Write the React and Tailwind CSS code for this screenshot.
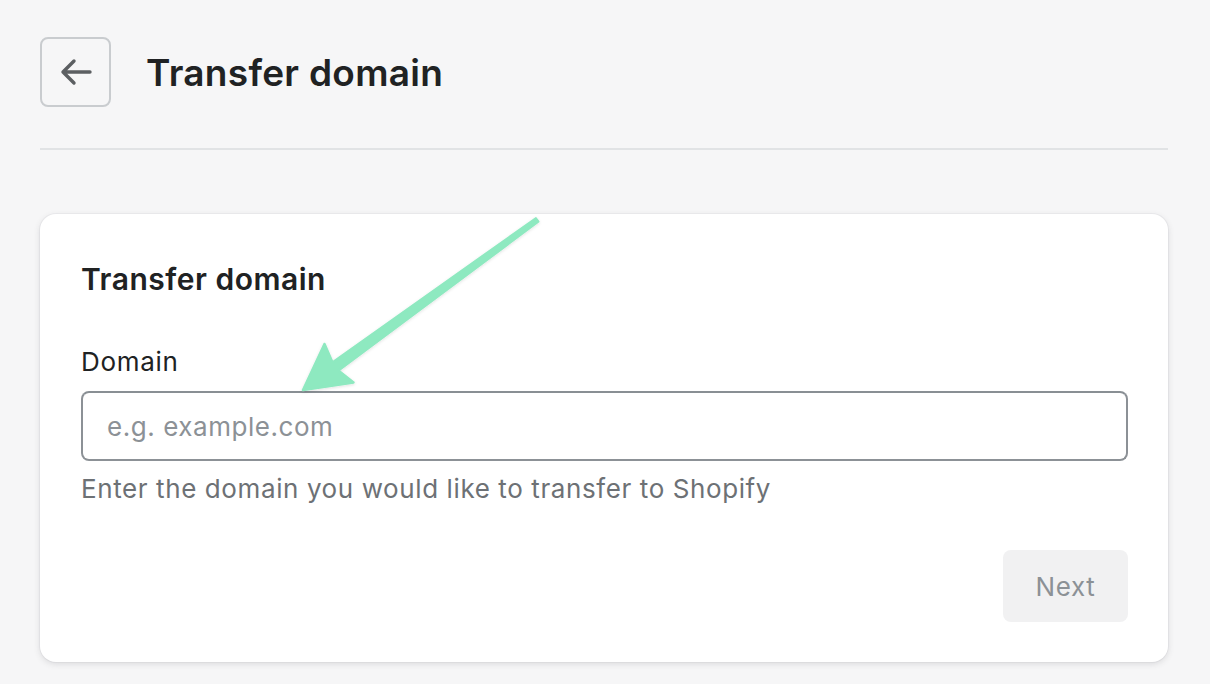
import React from 'react';

const font = { fontFamily: 'Inter, "Liberation Sans", sans-serif' };

const BackArrow = () => (
	<svg width="34" height="30" viewBox="0 0 34 30" fill="none">
		<path d="M31 15H4M15 4L4 15l11 11" stroke="#5c5f62" strokeWidth="3.4" strokeLinecap="round" strokeLinejoin="round" />
	</svg>
);

// arrow drawn over the page, pointing at the input
const GreenArrow = () => (
	<svg className="absolute inset-0 w-full h-full pointer-events-none" viewBox="0 0 1210 684">
		<defs>
			<filter id="sh" x="-20%" y="-20%" width="140%" height="140%">
				<feDropShadow dx="0" dy="1" stdDeviation="1.5" floodColor="#000" floodOpacity="0.12" />
			</filter>
		</defs>
		<polygon
			points="535.8,218.4 332.5,362.4 324.5,344 303,390 353.5,382.5 338.3,370.5 538.2,221.6"
			fill="#8ee9c0"
			stroke="#8ee9c0"
			strokeWidth="2.5"
			strokeLinejoin="round"
			filter="url(#sh)"
		/>
	</svg>
);

const App = () => {
	return (
		<div className="relative min-h-[684px] bg-[#f6f6f7] pl-[40px] pr-[42px] pt-[37px] overflow-hidden" style={font}>
			{/* header */}
			<div className="flex items-center h-[70px] gap-[35px]">
				<button className="w-[71px] h-[70px] rounded-[8px] border-2 border-[#c9cccf] flex items-center justify-center">
					<BackArrow />
				</button>
				<h1 className="text-[37px] font-semibold text-[#202223] leading-none tracking-[0.3px]">Transfer domain</h1>
			</div>

			<div className="mt-[41px] border-t-2 border-[#e1e3e5]" />

			{/* card */}
			<div className="mt-[64px] bg-white rounded-[16px] shadow-[0_0_0_1px_rgba(63,63,68,0.04),0_2px_6px_rgba(63,63,68,0.15)] pl-[41px] pr-[40px] pt-[45px] pb-[40px]">
				<h2 className="text-[30px] font-semibold text-[#202223] leading-[40px] tracking-[0.5px]">Transfer domain</h2>

				<label className="block mt-[45px] text-[26px] text-[#202223] leading-[36px] tracking-[0.7px]">Domain</label>
				<div className="mt-[11px] h-[70px] rounded-[8px] border-2 border-[#8c9196] border-t-[#898f94] flex items-center px-[24px]">
					<input
						className="w-full outline-none bg-transparent text-[26px] tracking-[0.55px] text-[#202223] placeholder:text-[#8c9196]"
						placeholder="e.g. example.com"
						style={font}
					/>
				</div>
				<p className="mt-[10px] text-[26px] text-[#6d7175] leading-[36px] tracking-[0.6px]">Enter the domain you would like to transfer to Shopify</p>

				<div className="flex justify-end mt-[43px]">
					<button className="w-[125px] h-[72px] rounded-[8px] bg-[#f1f1f2] text-[26px] tracking-[0.7px] text-[#8c9196]">Next</button>
				</div>
			</div>

			<GreenArrow />
		</div>
	);
};

export default App;
